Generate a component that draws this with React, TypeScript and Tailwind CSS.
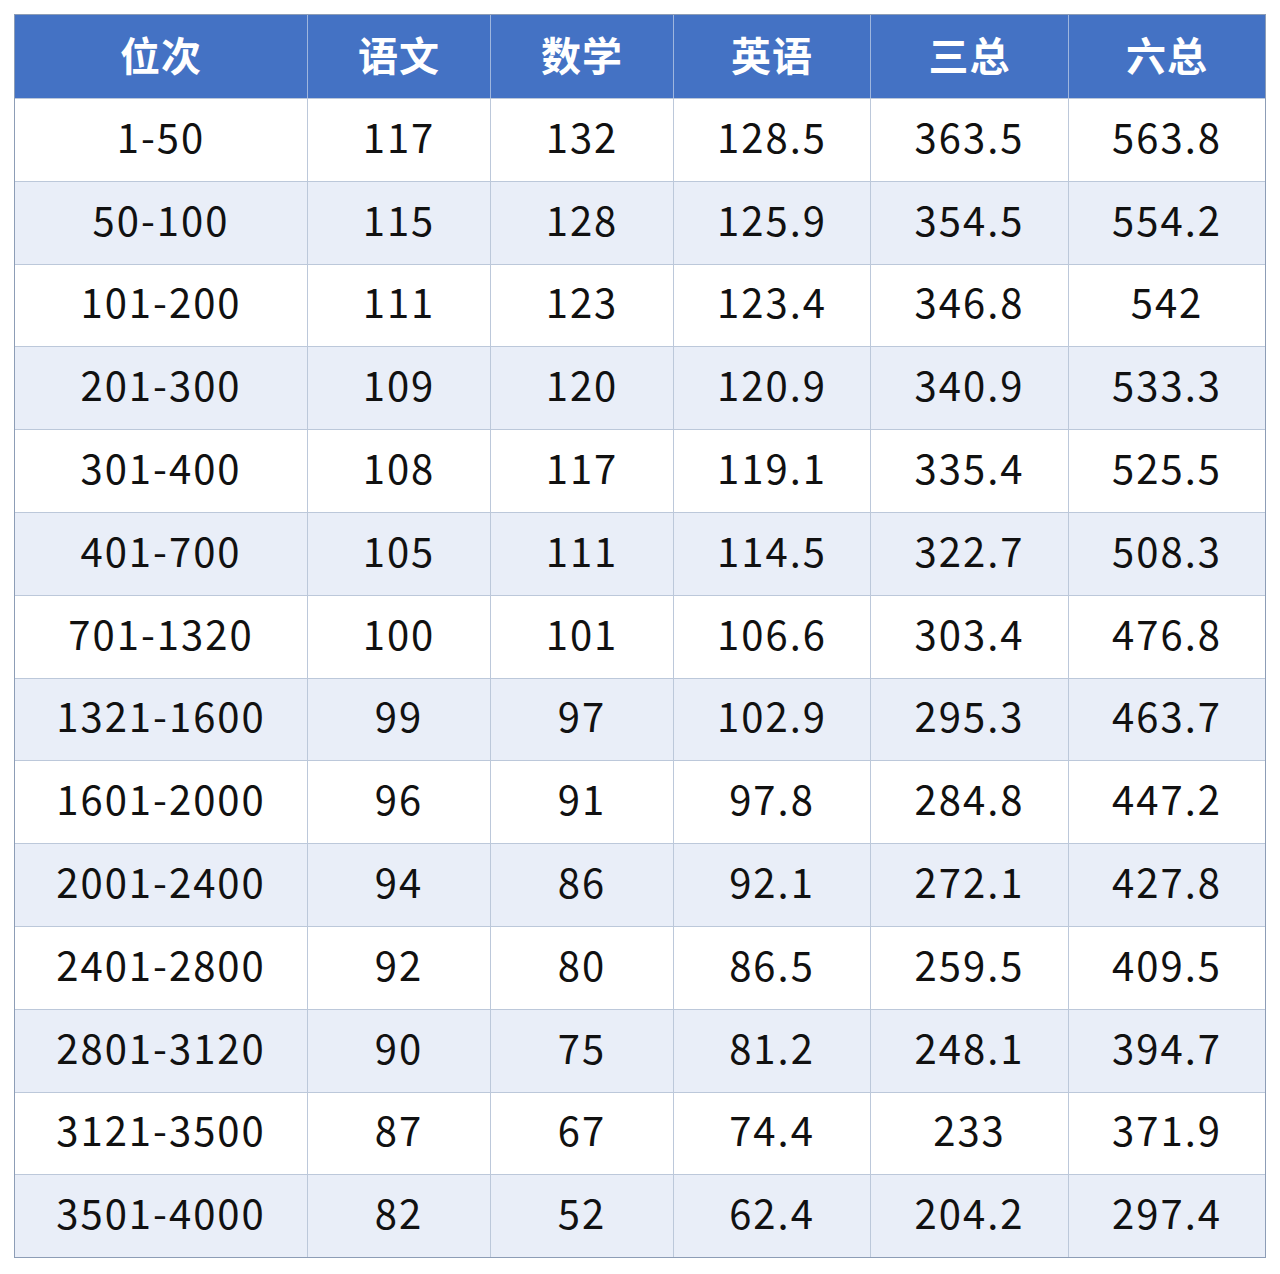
const HEAD = ["位次", "语文", "数学", "英语", "三总", "六总"];

const ROWS: string[][] = [
  ["1-50", "117", "132", "128.5", "363.5", "563.8"],
  ["50-100", "115", "128", "125.9", "354.5", "554.2"],
  ["101-200", "111", "123", "123.4", "346.8", "542"],
  ["201-300", "109", "120", "120.9", "340.9", "533.3"],
  ["301-400", "108", "117", "119.1", "335.4", "525.5"],
  ["401-700", "105", "111", "114.5", "322.7", "508.3"],
  ["701-1320", "100", "101", "106.6", "303.4", "476.8"],
  ["1321-1600", "99", "97", "102.9", "295.3", "463.7"],
  ["1601-2000", "96", "91", "97.8", "284.8", "447.2"],
  ["2001-2400", "94", "86", "92.1", "272.1", "427.8"],
  ["2401-2800", "92", "80", "86.5", "259.5", "409.5"],
  ["2801-3120", "90", "75", "81.2", "248.1", "394.7"],
  ["3121-3500", "87", "67", "74.4", "233", "371.9"],
  ["3501-4000", "82", "52", "62.4", "204.2", "297.4"],
];

const font = { fontFamily: '"Noto Sans CJK SC", "Noto Sans", sans-serif' };

export default function App() {
  return (
    <div className="w-[1280px] h-[1274px] bg-white pt-[14px] pl-[14px]" style={font}>
      <div className="w-fit border border-[#8d9db6] grid grid-cols-[292px_183px_183px_197px_198px_197px]">
        {HEAD.map((h, i) => (
          <div
            key={h}
            className={`h-[83px] pb-[6px] bg-[#4472c4] text-white font-bold text-[40px] tracking-[1px] flex items-center justify-center ${
              i > 0 ? "border-l border-[#9fb6de]" : ""
            }`}
          >
            {h}
          </div>
        ))}
        {ROWS.map((row, r) =>
          row.map((cell, c) => (
            <div
              key={`${r}-${c}`}
              className={`h-[82.8px] pb-[8px] flex items-center justify-center text-[40px] tracking-[2px] text-[#111] border-t border-[#bcc8da] ${
                c > 0 ? "border-l" : ""
              } ${r % 2 === 1 ? "bg-[#e9eef8]" : "bg-white"}`}
            >
              {cell}
            </div>
          ))
        )}
      </div>
    </div>
  );
}
